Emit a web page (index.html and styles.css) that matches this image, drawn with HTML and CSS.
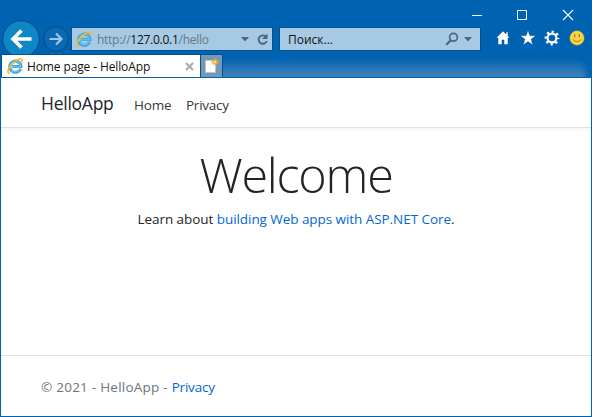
FILE: index.html
```html
<!DOCTYPE html>
<html lang="en">
<head>
<meta charset="utf-8">
<title>Home page - HelloApp</title>
<link rel="stylesheet" href="styles.css">
</head>
<body>
<svg width="0" height="0" class="defs">
  <symbol id="ie" viewBox="0 0 16 16">
    <path d="M13.6 10.8A5.6 5.6 0 1 1 14 8.6H5.2" fill="none" stroke="#3d94cd" stroke-width="3"/>
    <path d="M13.2 10.8A5.3 5.3 0 1 1 13.7 8.6H5.2" fill="none" stroke="#62c2ef" stroke-width="1.6"/>
    <path d="M3 14.9C.4 15.8.2 12.900 2.500 9.300 5.500 4.600 11.600.200 14.300 1.200c1 .5.9 1.900.3 3.200" fill="none" stroke="#f4b82c" stroke-width="1.600"/>
  </symbol>
</svg>
<div class="window">
  <div class="titlebar">
    <svg width="12" height="12"><path d="M1 6.500h10" stroke="#fff"/></svg>
    <svg width="12" height="12"><path d="M1.500 1.500h9v9h-9z" stroke="#fff" fill="none"/></svg>
    <svg width="12" height="12"><path d="M1 1l10 10M11 1L1 11" stroke="#fff" stroke-width="1.100"/></svg>
  </div>
  <div class="toolbar">
    <svg class="back" width="38" height="38"><circle cx="19" cy="19" r="18.200" fill="#0e87c4" stroke="#07508e"/><path d="M29.500 19H12M19.500 10.500L11 19l8.500 8.500" fill="none" stroke="#fff" stroke-width="3.600"/></svg>
    <svg class="forward" width="26" height="26"><circle cx="13" cy="13" r="12.300" fill="#0969b1" stroke="#074b87"/><path d="M6.500 13h11M13 7.500l5.500 5.500-5.500 5.500" fill="none" stroke="#9bc6e7" stroke-width="2.200"/></svg>
    <div class="field address">
      <svg class="ie" width="16" height="16"><use href="#ie"/></svg>
      <span class="url">http://<b>127.0.0.1</b>/hello</span>
      <svg width="8" height="5"><path d="M0 0h8L4 4.500z" fill="#4e6778"/></svg>
      <svg class="reload" width="12" height="13"><path d="M8.700 3.500A4.200 4.200 0 1 0 9.800 8" fill="none" stroke="#4e6778" stroke-width="1.900"/><path d="M10.500 .5v5.500H5z" fill="#4e6778"/></svg>
    </div>
    <div class="field search">
      <span class="query">Поиск...</span>
      <svg width="14" height="14"><circle cx="8.500" cy="5.300" r="3.900" fill="none" stroke="#4e6778" stroke-width="1.700"/><path d="M5.500 8.500L1.300 12.700" stroke="#4e6778" stroke-width="2.300"/></svg>
      <svg class="drop" width="8" height="5"><path d="M0 0h8L4 4.500z" fill="#4e6778"/></svg>
    </div>
    <div class="tools">
      <svg width="16" height="16"><path d="M8 1L1 8h2v6.500h4V10h2v4.500h4V8h2l-2-2V2h-2v2z" fill="#fff" stroke="#074b87" stroke-width=".5"/></svg>
      <svg width="16" height="16"><path d="M8 .5l1.900 5.200h5.600L11 9.200l1.700 5.600L8 11.500l-4.700 3.300L5 9.200.5 5.700h5.600z" fill="#fff" stroke="#074b87" stroke-width=".3"/></svg>
      <svg width="16" height="16"><circle cx="8" cy="8" r="4.400" fill="none" stroke="#fff" stroke-width="2.200"/><circle cx="8" cy="8" r="6.200" fill="none" stroke="#fff" stroke-width="2.400" stroke-dasharray="2.200 2.670" stroke-dashoffset="1.100"/></svg>
      <svg width="16" height="16"><circle cx="8" cy="8" r="7.200" fill="#fbd545" stroke="#c99a24" stroke-width=".5"/><path d="M5.700 4v3.600M10.300 4v3.600" stroke="#a5852c" stroke-width="1.300"/><path d="M3.700 9.500q4.300 4.400 8.600 0" fill="none" stroke="#a5852c"/></svg>
    </div>
  </div>
  <div class="tabs">
    <div class="tab">
      <svg width="16" height="16"><use href="#ie"/></svg>
      <span class="tab-title">Home page - HelloApp</span>
      <svg class="close" width="9" height="9"><path d="M1 1l7 7M8 1L1 8" stroke="#a9a9a9" stroke-width="2"/></svg>
    </div>
    <div class="new-tab"><svg width="15" height="16"><path d="M1.500 2.500h10v12h-10z" fill="#fff" stroke="#c4c0bd"/><path d="M11 .5v7M7.500 4h7M8.700 1.700l4.600 4.600M13.300 1.700L8.700 6.300" stroke="#f4ac2e" stroke-width="1.300"/><circle cx="11" cy="4" r="1.200" fill="#ffe080"/></svg></div>
    <div class="tab-space"></div>
  </div>
  <div class="page">
    <header class="nav">
      <a class="brand">HelloApp</a><a class="home">Home</a><a class="privacy">Privacy</a>
    </header>
    <main>
      <h1>Welcome</h1>
      <p>Learn about <a>building Web apps with ASP.NET Core</a>.</p>
    </main>
    <footer><span class="copyright">© 2021 - HelloApp - </span><a>Privacy</a></footer>
  </div>
</div>
</body>
</html>
```
FILE: styles.css
```css
* { box-sizing: border-box; }
body { margin: 0; overflow: hidden; font-family: "Open Sans", "Noto Sans", sans-serif; }
svg { display: block; flex: none; }
.defs { position: absolute; }
.window { width: 592px; height: 417px; display: flex; flex-direction: column; background: #0063b1; border: 1px solid #0063b1; border-top: 0; }
.titlebar { height: 27px; flex: none; display: flex; justify-content: flex-end; gap: 33px; padding: 9px 17px 0 0; }
.titlebar svg:not(:last-child) { margin-left: -1px; margin-right: 1px; }
.toolbar { height: 24px; flex: none; display: flex; align-items: center; padding-left: 1px; }
.back { margin: -7px 3px -7px 0; }
.field { flex: none; height: 24px; display: flex; align-items: center; border: 1px solid #07508e; background: #a6cae4; font-size: 12px; color: #111; white-space: nowrap; }
.address { width: 202px; margin-left: 2px; padding-left: 4px; }
.url { flex: none; width: 144px; margin-left: 5px; color: #657887; letter-spacing: -.27px; }
.url b { font-weight: 400; color: #111; }
.reload { margin-left: 8px; }
.search { width: 202px; margin-left: 6px; padding-left: 8px; }
.query { width: 157px; }
.drop { margin-left: 5px; }
.tools { display: flex; gap: 8.500px; margin: -2px 0 0 14px; }
.tabs { height: 27px; flex: none; padding-top: 3px; display: flex; position: relative; border-bottom: 1px solid #0063b1; }
.tab { width: 200px; display: flex; align-items: center; padding-left: 5px; background: #fff; border: 1px solid #07508e; border-width: 1px 1px 0 1px; font-size: 12px; color: #111; white-space: nowrap; }
.tab-title { flex: none; width: 158px; margin-left: 4px; letter-spacing: -.12px; }
.new-tab { width: 22px; background: #7399ba; border: 1px solid #07508e; border-width: 1px 1px 0 0; padding: 3px 0 0 3px; }
.tab-space { flex: 1; margin: 4px 2px 0 0; border-radius: 0 12px 0 0; background: linear-gradient(#0063b1, #4583ba); box-shadow: inset -7px 0 6px -4px #0063b1; }
.page { flex: 1; display: flex; flex-direction: column; background: #fff; color: #212529; font-size: 14px; }
.nav { height: 50px; flex: none; display: flex; align-items: baseline; padding: 13px 0 0 40px; border-bottom: 1px solid #dee2e6; box-shadow: 0 2px 2px rgba(0,0,0,.04); white-space: nowrap; line-height: 24px; font-size: 13.500px; }
.brand { width: 93px; font-size: 17.500px; letter-spacing: -.25px; }
.home { width: 52px; color: #343a40; letter-spacing: -.15px; }
.privacy { color: #343a40; letter-spacing: -.25px; }
main { flex: 1; text-align: center; }
h1 { margin: 16px 0 0; font-size: 48.500px; line-height: 60px; font-weight: 300; letter-spacing: -1.250px; }
p { margin: 5px 0 0; font-size: 13.500px; line-height: 21px; letter-spacing: -.06px; }
p a, footer a { color: #0366d6; }
footer { height: 61px; flex: none; padding-left: 40px; border-top: 1px solid #dee2e6; line-height: 62px; font-size: 13.500px; color: #6c757d; }
.copyright { letter-spacing: .24px; }
footer a { letter-spacing: -.2px; }
```
